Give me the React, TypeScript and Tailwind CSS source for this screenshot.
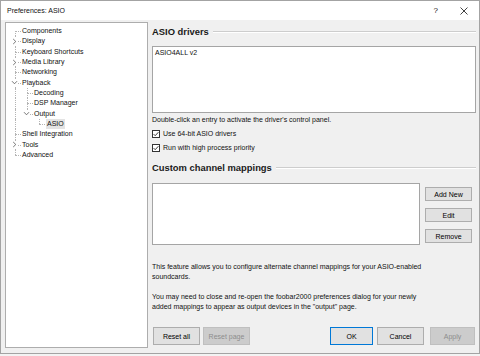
import type { ReactNode } from 'react';

type Exp = 'none' | 'closed' | 'open';

interface Node {
  label: string;
  depth: number;
  exp: Exp;
  guides: boolean[]; // ancestor levels that keep a vertical line
  first?: boolean;
  last?: boolean;
  selected?: boolean;
}

// Preference pages, flattened in display order.
const TREE: Node[] = [
  { label: 'Components', depth: 0, exp: 'none', guides: [], first: true },
  { label: 'Display', depth: 0, exp: 'closed', guides: [] },
  { label: 'Keyboard Shortcuts', depth: 0, exp: 'none', guides: [] },
  { label: 'Media Library', depth: 0, exp: 'closed', guides: [] },
  { label: 'Networking', depth: 0, exp: 'none', guides: [] },
  { label: 'Playback', depth: 0, exp: 'open', guides: [] },
  { label: 'Decoding', depth: 1, exp: 'none', guides: [true] },
  { label: 'DSP Manager', depth: 1, exp: 'none', guides: [true] },
  { label: 'Output', depth: 1, exp: 'open', guides: [true], last: true },
  { label: 'ASIO', depth: 2, exp: 'none', guides: [true, false], last: true, selected: true },
  { label: 'Shell Integration', depth: 0, exp: 'none', guides: [] },
  { label: 'Tools', depth: 0, exp: 'closed', guides: [] },
  { label: 'Advanced', depth: 0, exp: 'none', guides: [], last: true },
];

const dot = 'absolute border-dotted border-[#b4b4b4]';

function Chevron({ open }: { open: boolean }) {
  return (
    <svg width="7" height="7" viewBox="0 0 7 7" className="bg-white">
      {open ? (
        <path d="M1 2.2 L3.5 4.8 L6 2.2" fill="none" stroke="#666" strokeWidth="0.9" />
      ) : (
        <path d="M2.2 1 L4.8 3.5 L2.2 6" fill="none" stroke="#666" strokeWidth="0.9" />
      )}
    </svg>
  );
}

function TreeRow({ n }: { n: Node }) {
  return (
    <div className="flex items-center h-[10.33px]">
      {n.guides.map((g, i) => (
        <div key={i} className="relative w-[12px] h-full shrink-0">
          {g && <div className={`${dot} left-[6px] top-0 bottom-0 border-l`} />}
        </div>
      ))}
      <div className="relative w-[12px] h-full shrink-0">
        {!n.first && <div className={`${dot} left-[6px] top-0 h-1/2 border-l`} />}
        {!n.last && <div className={`${dot} left-[6px] top-1/2 bottom-0 border-l`} />}
        <div className={`${dot} left-[6px] right-0 top-1/2 border-t`} />
        {n.exp !== 'none' && (
          <div className="absolute left-[2px] top-[calc(50%-3.5px)] flex">
            <Chevron open={n.exp === 'open'} />
          </div>
        )}
      </div>
      <span className={`ml-[1px] leading-[10px] whitespace-nowrap text-[#111] ${n.selected ? 'bg-[#e3e3e3] px-[1px]' : ''}`}>
        {n.label}
      </span>
    </div>
  );
}

function Heading({ children }: { children: ReactNode }) {
  return (
    <div className="flex items-center h-[12px]">
      <span className="text-[9.4px] font-bold text-[#1a1a1a] whitespace-nowrap">{children}</span>
      <div className="flex-1 ml-[4px] border-t border-[#cdcdcd] border-b border-b-white" />
    </div>
  );
}

function Check({ label }: { label: string }) {
  return (
    <div className="flex items-center h-[10px]">
      <svg width="8" height="8" viewBox="0 0 8 8" className="shrink-0">
        <rect x="0.5" y="0.5" width="7" height="7" fill="#fff" stroke="#333" />
        <path d="M1.6 4.1 L3.2 5.7 L6.4 2.2" fill="none" stroke="#222" strokeWidth="0.9" />
      </svg>
      <span className="ml-[3px] leading-[10px]">{label}</span>
    </div>
  );
}

function Btn({ children, w, h, def, disabled }: { children: ReactNode; w: string; h: string; def?: boolean; disabled?: boolean }) {
  const tone = disabled
    ? 'bg-[#cccccc] border-[#bfbfbf] text-[#8d8d8d]'
    : def
      ? 'bg-[#e1e1e1] border-[#0078d7] text-black'
      : 'bg-[#e1e1e1] border-[#adadad] text-black';
  return (
    <div className={`${w} ${h} border ${tone} flex items-center justify-center shrink-0 leading-none`}>{children}</div>
  );
}

export default function App() {
  return (
    <div className="w-[480px] h-[356px] bg-[#f3f3f3] font-['Liberation_Sans',Arial,sans-serif] text-[7px] text-[#111]">
      <div className="w-[480px] h-[354px] border border-[#a3a3a3] flex flex-col bg-[#f0f0f0]">
        {/* title bar */}
        <div className="h-[19px] bg-white flex items-center pl-[6px] shrink-0">
          <span className="text-[7px] mt-[1px]">Preferences: ASIO</span>
          <span className="ml-auto text-[8px]">?</span>
          <div className="ml-[22px] mr-[11px] flex">
            <svg width="8" height="8" viewBox="0 0 8 8">
              <path d="M0.5 0.5 L7.5 7.5 M7.5 0.5 L0.5 7.5" stroke="#111" strokeWidth="0.8" />
            </svg>
          </div>
        </div>

        <div className="flex-1 flex pt-[2px] pl-[4px] pr-[3px] pb-[5px]">
          {/* page tree */}
          <div className="w-[143px] bg-white border border-[#adadad] pt-[3px] pl-[3px] shrink-0">
            {TREE.map((n) => (
              <TreeRow key={n.label} n={n} />
            ))}
          </div>

          {/* ASIO page */}
          <div className="flex-1 ml-[4px] flex flex-col min-w-0">
            <div className="mt-[4px]">
              <Heading>ASIO drivers</Heading>
            </div>
            <div className="mt-[8px] h-[67px] bg-white border border-[#a5a5a5] px-[2px] pt-[1px]">
              <div className="leading-[10px]">ASIO4ALL v2</div>
            </div>
            <div className="mt-[2px] leading-[10px]">Double-click an entry to activate the driver's control panel.</div>
            <div className="mt-[4px]">
              <Check label="Use 64-bit ASIO drivers" />
            </div>
            <div className="mt-[4px]">
              <Check label="Run with high process priority" />
            </div>
            <div className="mt-[9px]">
              <Heading>Custom channel mappings</Heading>
            </div>
            <div className="mt-[9px] flex">
              <div className="w-[268px] h-[62px] bg-white border border-[#a5a5a5]" />
              <div className="ml-[5px] pt-[4px] flex flex-col gap-[7px]">
                <Btn w="w-[47px]" h="h-[14px]">Add New</Btn>
                <Btn w="w-[47px]" h="h-[14px]">Edit</Btn>
                <Btn w="w-[47px]" h="h-[14px]">Remove</Btn>
              </div>
            </div>
            <p className="mt-[17px] leading-[10px] pr-[40px]">
              This feature allows you to configure alternate channel mappings for your ASIO-enabled soundcards.
            </p>
            <p className="mt-[10px] leading-[10px] pr-[40px]">
              You may need to close and re-open the foobar2000 preferences dialog for your newly added mappings to
              appear as output devices in the "output" page.
            </p>
            <div className="mt-[15px] flex">
              <div className="ml-[1px]">
                <Btn w="w-[47px]" h="h-[18px]">Reset all</Btn>
              </div>
              <div className="ml-[3px]">
                <Btn w="w-[47px]" h="h-[18px]" disabled>Reset page</Btn>
              </div>
              <div className="ml-auto flex mr-[1px]">
                <Btn w="w-[43px]" h="h-[18px]" def>OK</Btn>
                <div className="ml-[4px]">
                  <Btn w="w-[47px]" h="h-[18px]">Cancel</Btn>
                </div>
                <div className="ml-[6px]">
                  <Btn w="w-[45px]" h="h-[18px]" disabled>Apply</Btn>
                </div>
              </div>
            </div>
          </div>
        </div>
      </div>
    </div>
  );
}
